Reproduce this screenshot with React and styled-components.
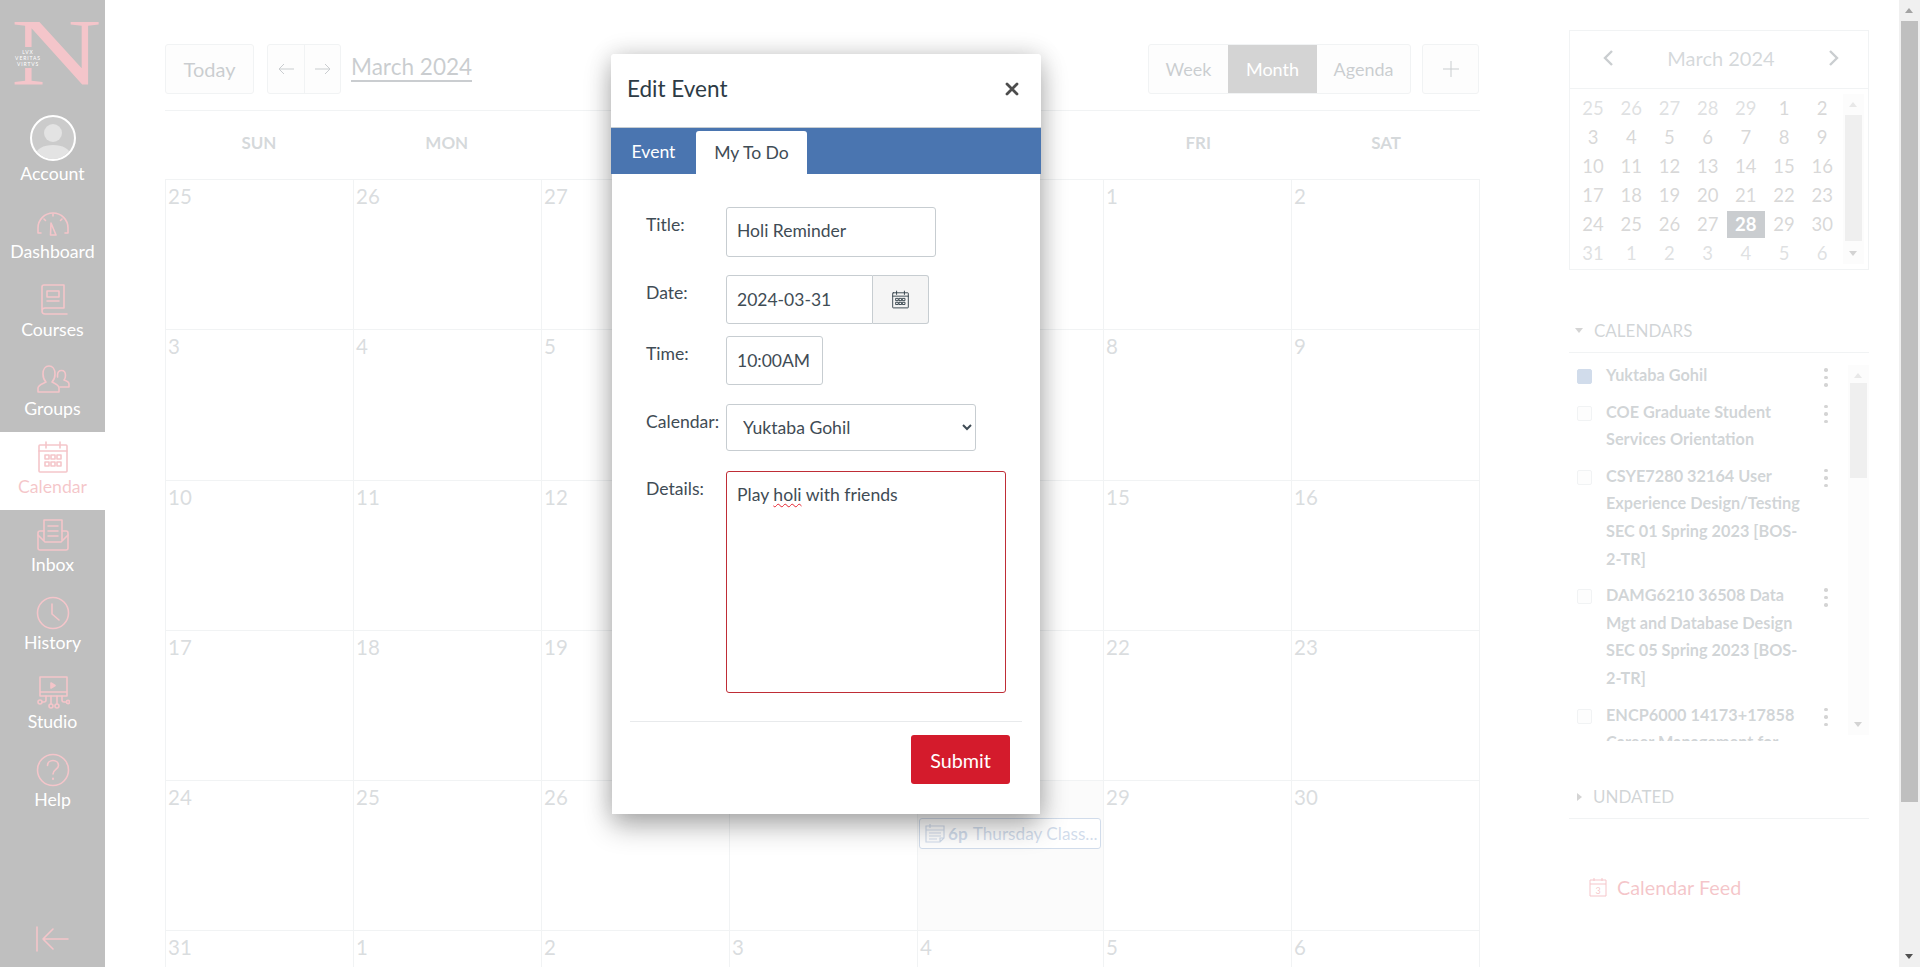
import React from 'react';
import styled, { createGlobalStyle } from 'styled-components';

const GlobalStyle = createGlobalStyle`
  html, body { margin: 0; padding: 0; height: 100%; overflow: hidden; background: #fff; }
  body { font-family: Lato, "Liberation Sans", sans-serif; color: #2d3b45; }
  * { box-sizing: border-box; }
`;

const RED = '#d41b2c';
const BLUE = '#4a75b0';
const INK = '#2d3b45';
const FORM_INK = '#3f4c55';
const LINE = '#c7cdd1';

//Sidebar icons
const Stroke = styled.svg`
  display: block;
  fill: none;
  stroke: ${RED};
  stroke-width: 1.6;
  stroke-linecap: round;
  stroke-linejoin: round;
`;

const DashboardIcon = () => (
  <Stroke width="34" height="34" viewBox="0 0 34 34">
    <path d="M5 28h-3v-5a15 15 0 0 1 30 0v5h-3" />
    <path d="M15 18l5 12h-5.500z" />
    <path d="M17 9v2M8 14l1.500 1.500M26 14l-1.500 1.500" />
  </Stroke>
);
const CoursesIcon = () => (
  <Stroke width="34" height="34" viewBox="0 0 34 34">
    <path d="M6 27V4a2 2 0 0 1 2-2h20v23H9a3 3 0 0 0-3 3 3 3 0 0 0 3 3h22" />
    <path d="M11 8h12v6H11zM11 18h12" />
  </Stroke>
);
const GroupsIcon = () => (
  <Stroke width="34" height="34" viewBox="0 0 34 34">
    <path d="M2 30v-4c0-3 4-4 8-6 -2-2-3-5-3-8 0-5 2.500-8 6-8s6 3 6 8c0 3-1 6-3 8 4 2 7 3 7 6v4z" />
    <path d="M24 25h9v-3c0-2-2-3-5-4 1-1 1.500-3 1.500-4.500 0-3-1.500-5-4-5s-4 2-4 5c0 .5 0 1 .1 1.500" />
  </Stroke>
);
const CalendarIcon = ({ size = 34, color }) => (
  <Stroke width={size} height={size} viewBox="0 0 34 34" style={color ? { stroke: color } : undefined}>
    <rect x="3" y="5" width="28" height="27" rx="1" />
    <path d="M3 11h28M10 2v6M24 2v6" />
    <path d="M9 15h4v4H9zM15 15h4v4h-4zM21 15h4v4h-4zM9 22h4v4H9zM15 22h4v4h-4zM21 22h4v4h-4z" />
  </Stroke>
);
const InboxIcon = () => (
  <Stroke width="34" height="34" viewBox="0 0 34 34">
    <path d="M8 22V2h18v20" />
    <path d="M12 8h10M12 13h10M12 18h10" />
    <path d="M8 13H4a2 2 0 0 0-2 2v15a2 2 0 0 0 2 2h26a2 2 0 0 0 2-2V15a2 2 0 0 0-2-2h-4" />
    <path d="M2 17l7 7h16l7-7" />
  </Stroke>
);
const HistoryIcon = () => (
  <Stroke width="34" height="34" viewBox="0 0 34 34">
    <circle cx="17" cy="17" r="15.500" />
    <path d="M16 8v10l7 6" />
  </Stroke>
);
const StudioIcon = () => (
  <Stroke width="34" height="34" viewBox="0 0 34 34">
    <path d="M4 2h27v19H4zM4 17h27" />
    <path d="M15 8l4 2.500-4 2.500z" fill={RED} />
    <path d="M10 21v4a2 2 0 0 1-2 2H6M15 21v8M21 21v8M26 21v4a2 2 0 0 0 2 2h2" />
    <circle cx="4" cy="27" r="2" />
    <circle cx="15" cy="31" r="2" />
    <circle cx="21" cy="31" r="2" />
    <circle cx="32" cy="27" r="1.600" />
  </Stroke>
);
const HelpIcon = () => (
  <Stroke width="34" height="34" viewBox="0 0 34 34">
    <circle cx="17" cy="17" r="15.500" />
    <path d="M11.500 12.500c0-3 2.500-5 5.500-5s5.500 2 5.500 5c0 4-5.500 4-5.500 8.500" />
    <path d="M17 25.500v.5" strokeWidth="2" />
  </Stroke>
);

const NAV = [
  { label: 'Dashboard', Icon: DashboardIcon },
  { label: 'Courses', Icon: CoursesIcon },
  { label: 'Groups', Icon: GroupsIcon },
  { label: 'Calendar', Icon: CalendarIcon, active: true },
  { label: 'Inbox', Icon: InboxIcon },
  { label: 'History', Icon: HistoryIcon },
  { label: 'Studio', Icon: StudioIcon },
  { label: 'Help', Icon: HelpIcon },
];

const WEEKDAYS = ['SUN', 'MON', 'TUE', 'WED', 'THU', 'FRI', 'SAT'];
const WEEKS = [
  [25, 26, 27, 28, 29, 1, 2],
  [3, 4, 5, 6, 7, 8, 9],
  [10, 11, 12, 13, 14, 15, 16],
  [17, 18, 19, 20, 21, 22, 23],
  [24, 25, 26, 27, 28, 29, 30],
  [31, 1, 2, 3, 4, 5, 6],
];

const CALENDARS = [
  { name: 'Yuktaba Gohil', on: true },
  { name: 'COE Graduate Student Services Orientation' },
  { name: 'CSYE7280 32164 User Experience Design/Testing SEC 01 Spring 2023 [BOS-2-TR]' },
  { name: 'DAMG6210 36508 Data Mgt and Database Design SEC 05 Spring 2023 [BOS-2-TR]' },
  { name: 'ENCP6000 14173+17858 Career Management for' },
];

const App = () => (
  <Viewport>
    <GlobalStyle />
    <Shell>
      <Sidebar>
        <Logo>
          <svg width="105" height="112" viewBox="0 0 105 112">
            <text fill={RED} fontFamily="'Liberation Serif', serif" fontSize="114" transform="translate(11 85) scale(1.1 .835)">N</text>
            <rect x="12" y="47" width="32" height="21" fill="#000" />
            <LogoMotto x="28" y="53.500">LVX</LogoMotto>
            <LogoMotto x="28" y="59.500">VERITAS</LogoMotto>
            <LogoMotto x="28" y="65.500">VIRTVS</LogoMotto>
          </svg>
        </Logo>
        <NavItem $account>
          <Avatar>
            <svg width="42" height="40" viewBox="0 0 42 40">
              <circle cx="21" cy="14" r="9" fill="#8e8e8e" />
              <path d="M2 40c1-11 10-14 19-14s18 3 19 14z" fill="#8e8e8e" />
            </svg>
          </Avatar>
          <NavLabel>Account</NavLabel>
        </NavItem>
        {NAV.map(({ label, Icon, active }) => (
          <NavItem key={label} $active={active}>
            <IconSlot><Icon /></IconSlot>
            <NavLabel $active={active}>{label}</NavLabel>
          </NavItem>
        ))}
        <Collapse>
          <Stroke width="34" height="26" viewBox="0 0 34 26">
            <path d="M2 1v24M33 13H8M18 3L8 13l10 10" />
          </Stroke>
        </Collapse>
      </Sidebar>

      <Main>
        <Toolbar>
          <ToolButton $width={89}>Today</ToolButton>
          <ArrowGroup>
            <ArrowButton>
              <svg width="16" height="12" viewBox="0 0 16 12" fill="none" stroke={INK} strokeWidth="1"><path d="M16 6H1M6 1L1 6l5 5" /></svg>
            </ArrowButton>
            <ArrowButton>
              <svg width="16" height="12" viewBox="0 0 16 12" fill="none" stroke={INK} strokeWidth="1"><path d="M0 6h15M10 1l5 5-5 5" /></svg>
            </ArrowButton>
          </ArrowGroup>
          <MonthTitle>March 2024</MonthTitle>
          <ViewGroup>
            <ViewTab $width={79}>Week</ViewTab>
            <ViewTab $width={89} $active>Month</ViewTab>
            <ViewTab $width={93}>Agenda</ViewTab>
          </ViewGroup>
          <PlusButton>
            <svg width="18" height="18" viewBox="0 0 18 18">
              <path d="M9 1v16M1 9h16" stroke={INK} strokeWidth="1" />
            </svg>
          </PlusButton>
        </Toolbar>
        <WeekHeader>
          {WEEKDAYS.map((d) => <WeekDay key={d}>{d}</WeekDay>)}
        </WeekHeader>
        <MonthGrid>
          {WEEKS.map((week, w) => week.map((day, d) => (
            <DayCell key={`${w}-${d}`} $today={w === 4 && d === 4}>
              <DayNum>{day}</DayNum>
              {w === 4 && d === 4 && (
                <EventPill>
                  <svg width="22" height="22" viewBox="0 0 22 22" fill="none" stroke={BLUE} strokeWidth="1.200">
                    <path d="M2 4h18v12l-4 4H2zM6 2v4M2 8h18M5 11h12M5 14h12M5 17h8M16 20v-4h4" />
                  </svg>
                  <EventTime>6p</EventTime>
                  <EventName>Thursday Class...</EventName>
                </EventPill>
              )}
            </DayCell>
          )))}
        </MonthGrid>
      </Main>

      <Aside>
        <MiniCalendar>
          <MiniHead>
            <svg width="14" height="18" viewBox="0 0 14 18" fill="none" stroke={INK} strokeWidth="2.400"><path d="M11 2L4 9l7 7" /></svg>
            <MiniTitle>March 2024</MiniTitle>
            <svg width="14" height="18" viewBox="0 0 14 18" fill="none" stroke={INK} strokeWidth="2.400"><path d="M3 2l7 7-7 7" /></svg>
          </MiniHead>
          <MiniBody>
            <MiniDays>
              {WEEKS.map((week, w) => week.map((day, d) => (
                <MiniDay
                  key={`${w}-${d}`}
                  $today={w === 4 && d === 4}
                  $outside={(w === 0 && d < 5) || w === 5}
                >
                  {day}
                </MiniDay>
              )))}
            </MiniDays>
            <InnerBar $top={1} $height={170}>
              <ScrollUp />
              <BarThumb $top={21} $height={126} />
              <ScrollDown />
            </InnerBar>
          </MiniBody>
        </MiniCalendar>

        <SectionHead $top={39}>
          <Caret $open />
          CALENDARS
        </SectionHead>
        <CalendarList>
          <CalendarRows>
            {CALENDARS.map((c) => (
              <CalendarRow key={c.name}>
                <Check $on={c.on} />
                <CalendarName>{c.name}</CalendarName>
                <Dots>
                  <i /><i /><i />
                </Dots>
              </CalendarRow>
            ))}
          </CalendarRows>
          <InnerBar $top={12} $height={370}>
            <ScrollUp />
            <BarThumb $top={18} $height={95} />
            <ScrollDown />
          </InnerBar>
        </CalendarList>
        <SectionHead $top={34}>
          <Caret />
          UNDATED
        </SectionHead>
        <FeedLink>
          <svg width="18" height="20" viewBox="0 0 18 20" fill="none" stroke={RED} strokeWidth="1">
            <path d="M1 3h16v16H1zM1 7h16M5 1v3M13 1v3" />
            <text x="9" y="16.500" textAnchor="middle" fontSize="9" fill={RED} stroke="none" fontFamily="Lato, sans-serif">3</text>
          </svg>
          Calendar Feed
        </FeedLink>
      </Aside>

      <Overlay />

      <Modal>
        <ModalHead>
          <ModalTitle>Edit Event</ModalTitle>
          <svg width="14" height="14" viewBox="0 0 14 14" stroke="#4d4d4d" strokeWidth="2.800" strokeLinecap="round">
            <path d="M2 2l10 10M12 2L2 12" />
          </svg>
        </ModalHead>
        <TabBar>
          <Tab>Event</Tab>
          <Tab $active>My To Do</Tab>
        </TabBar>
        <ModalBody>
          <FormRow $top={33}>
            <FieldLabel>Title:</FieldLabel>
            <TextField $width={210} $height={50} $lift={3} readOnly value="Holi Reminder" />
          </FormRow>
          <FormRow $top={18}>
            <FieldLabel>Date:</FieldLabel>
            <TextField $width={147} $height={49} $joined readOnly value="2024-03-31" />
            <DateButton>
              <CalendarIcon size={19} color={INK} />
            </DateButton>
          </FormRow>
          <FormRow $top={12}>
            <FieldLabel>Time:</FieldLabel>
            <TextField $width={97} $height={49} readOnly value="10:00AM" />
          </FormRow>
          <FormRow $top={19}>
            <FieldLabel>Calendar:</FieldLabel>
            <SelectField defaultValue="me">
              <option value="me">Yuktaba Gohil</option>
            </SelectField>
          </FormRow>
          <FormRow $top={20}>
            <FieldLabel>Details:</FieldLabel>
            <DetailsBox>Play <Misspelt>holi</Misspelt> with friends</DetailsBox>
          </FormRow>
          <FormFooter>
            <SubmitButton>Submit</SubmitButton>
          </FormFooter>
        </ModalBody>
      </Modal>
    </Shell>
    <PageScrollbar>
      <ScrollUp />
      <BarThumb $top={21} $height={781} />
      <ScrollDown />
    </PageScrollbar>
  </Viewport>
);

const Viewport = styled.div`
  display: flex;
  width: 100vw;
  height: 100vh;
  overflow: hidden;
`;

const Shell = styled.div`
  position: relative;
  display: flex;
  flex: 1;
  min-width: 0;
  height: 100%;
  overflow: hidden;
`;

const Overlay = styled.div`
  position: absolute;
  inset: 0;
  background: rgba(255, 255, 255, 0.75);
`;

const Sidebar = styled.nav`
  display: flex;
  flex-direction: column;
  flex: none;
  width: 105px;
  height: 100%;
  background: #000;
`;

const Logo = styled.div`
  flex: none;
  height: 112px;
`;

const LogoMotto = styled.text`
  fill: #fff;
  font-family: Lato, sans-serif;
  font-size: 5px;
  letter-spacing: 0.9px;
  text-anchor: middle;
`;

const NavItem = styled.div`
  display: flex;
  flex-direction: column;
  align-items: center;
  flex: none;
  height: ${(p) => (p.$account ? 85 : 78.3)}px;
  padding-top: ${(p) => (p.$account ? 3 : 8)}px;
  background: ${(p) => (p.$active ? '#fff' : 'transparent')};
`;

const IconSlot = styled.div`
  height: 34px;
`;

const Avatar = styled.div`
  display: flex;
  align-items: flex-end;
  justify-content: center;
  flex: none;
  width: 46px;
  height: 46px;
  border: 2px solid #fff;
  border-radius: 50%;
  background: #333;
  overflow: hidden;
`;

const NavLabel = styled.div`
  margin-top: 2px;
  font-size: 17.7px;
  line-height: 22px;
  color: ${(p) => (p.$active ? RED : '#fff')};
`;

const Collapse = styled.div`
  margin-top: auto;
  padding: 0 0 15px 35px;
`;

const Main = styled.main`
  flex: none;
  width: 1315px;
  margin-left: 60px;
`;

const Toolbar = styled.div`
  display: flex;
  align-items: center;
  height: 111px;
  padding: 44px 1px 16px 0;
  border-bottom: 1px solid ${LINE};
`;

const ToolButton = styled.div`
  display: flex;
  align-items: center;
  justify-content: center;
  width: ${(p) => p.$width}px;
  height: 50px;
  background: #f5f5f5;
  border: 1px solid ${LINE};
  border-radius: 3px;
  font-size: 20px;
  color: ${INK};
`;

const ArrowGroup = styled.div`
  display: flex;
  height: 50px;
  margin-left: 13px;
  background: #f5f5f5;
  border: 1px solid ${LINE};
  border-radius: 3px;
`;

const ArrowButton = styled.div`
  display: flex;
  align-items: center;
  justify-content: center;
  width: 36px;
  & + & {
    border-left: 1px solid ${LINE};
  }
`;

const MonthTitle = styled.div`
  margin: 0 0 2px 10px;
  font-size: 22.6px;
  line-height: 26px;
  color: ${INK};
  border-bottom: 2px solid ${INK};
`;

const ViewGroup = styled.div`
  display: flex;
  height: 50px;
  margin-left: auto;
  background: #f5f5f5;
  border: 1px solid ${LINE};
  border-radius: 3px;
  overflow: hidden;
`;

const ViewTab = styled.div`
  display: flex;
  align-items: center;
  justify-content: center;
  width: ${(p) => p.$width}px;
  font-size: 18px;
  background: ${(p) => (p.$active ? '#555' : 'transparent')};
  color: ${(p) => (p.$active ? '#fff' : INK)};
`;

const PlusButton = styled.div`
  display: flex;
  align-items: center;
  justify-content: center;
  width: 57px;
  height: 50px;
  margin-left: 11px;
  background: #f5f5f5;
  border: 1px solid ${LINE};
  border-radius: 3px;
`;

const WeekHeader = styled.div`
  display: grid;
  grid-template-columns: repeat(7, 1fr);
  height: 68px;
`;

const WeekDay = styled.div`
  display: flex;
  align-items: center;
  justify-content: center;
  padding-bottom: 5px;
  font-size: 17px;
  font-weight: 700;
  color: #5a6770;
`;

const MonthGrid = styled.div`
  display: grid;
  grid-template-columns: repeat(4, 188px) 186px 188px 188px;
  grid-auto-rows: 150.300px;
  border-top: 1px solid ${LINE};
`;

const DayCell = styled.div`
  padding: 3px 4px 0 2px;
  border-left: 1px solid ${LINE};
  border-bottom: 1px solid ${LINE};
  background: ${(p) => (p.$today ? '#eeeeee' : 'transparent')};
  &:nth-child(7n) {
    width: 189px;
    border-right: 1px solid ${LINE};
  }
`;

const DayNum = styled.div`
  font-size: 20.5px;
  line-height: 26px;
  color: #6b7780;
`;

const EventPill = styled.div`
  display: flex;
  align-items: center;
  height: 31px;
  margin: 8px -2px 0 -1px;
  padding: 0 0 1px 4px;
  background: #fff;
  border: 1px solid ${BLUE};
  border-radius: 3px;
  font-size: 17.2px;
  color: ${BLUE};
  white-space: nowrap;
  overflow: hidden;
`;

const EventTime = styled.span`
  margin-left: 2px;
  font-weight: 700;
`;

const EventName = styled.span`
  margin-left: 5px;
`;

const Aside = styled.aside`
  flex: none;
  width: 300px;
  margin-left: 89px;
  padding-top: 30px;
`;

const MiniCalendar = styled.div`
  height: 240px;
  border: 1px solid ${LINE};
`;

const MiniHead = styled.div`
  display: flex;
  align-items: center;
  justify-content: space-between;
  height: 58px;
  padding: 0 27px 4px 31px;
  border-bottom: 1px solid ${LINE};
`;

const MiniTitle = styled.div`
  font-size: 20px;
  color: #5a6770;
`;

const MiniBody = styled.div`
  display: flex;
  justify-content: space-between;
  padding: 4px 4px 0 4px;
`;

const MiniDays = styled.div`
  display: grid;
  grid-template-columns: repeat(7, 38.200px);
  grid-auto-rows: 29.200px;
`;

const MiniDay = styled.div`
  display: flex;
  align-items: center;
  justify-content: center;
  font-size: 18.5px;
  height: ${(p) => (p.$today ? 27 : 29)}px;
  margin-top: ${(p) => (p.$today ? 1 : 0)}px;
  font-weight: ${(p) => (p.$today ? 700 : 400)};
  background: ${(p) => (p.$today ? INK : 'transparent')};
  color: ${(p) => (p.$today ? '#fff' : p.$outside ? '#7f878d' : '#666')};
`;

const InnerBar = styled.div`
  position: relative;
  flex: none;
  width: 21px;
  height: ${(p) => p.$height}px;
  margin-top: ${(p) => p.$top}px;
  background: #f1f1f1;
`;

const BarThumb = styled.div`
  position: absolute;
  left: 2px;
  right: 2px;
  top: ${(p) => p.$top}px;
  height: ${(p) => p.$height}px;
  background: #bfbfbf;
`;

const ScrollUp = styled.div`
  position: absolute;
  left: 6px;
  top: 8px;
  border-left: 4.500px solid transparent;
  border-right: 4.500px solid transparent;
  border-bottom: 5px solid #a3a3a3;
`;

const ScrollDown = styled.div`
  position: absolute;
  left: 6px;
  bottom: 8px;
  border-left: 4.500px solid transparent;
  border-right: 4.500px solid transparent;
  border-top: 5px solid #505050;
`;

const SectionHead = styled.div`
  display: flex;
  align-items: center;
  height: 44px;
  margin-top: ${(p) => p.$top}px;
  padding-left: 6px;
  font-size: 17px;
  color: #4a5761;
  border-bottom: 1px solid ${LINE};
`;

const Caret = styled.span`
  width: 0;
  height: 0;
  margin-right: 11px;
  ${(p) => (p.$open
    ? `border-left: 4.500px solid transparent; border-right: 4.500px solid transparent; border-top: 5.500px solid #555;`
    : `margin-left: 2px; border-top: 4.500px solid transparent; border-bottom: 4.500px solid transparent; border-left: 5.500px solid #555;`)}
`;

const CalendarList = styled.div`
  display: flex;
  align-items: flex-start;
  height: 388px;
  overflow: hidden;
`;

const CalendarRows = styled.div`
  flex: 1;
  min-width: 0;
  padding: 8px 0 0 8px;
`;

const CalendarRow = styled.div`
  display: flex;
  margin-bottom: 9px;
`;

const Check = styled.span`
  flex: none;
  width: 15px;
  height: 15px;
  margin-top: 8px;
  border-radius: 2px;
  border: 1px solid ${(p) => (p.$on ? BLUE : LINE)};
  background: ${(p) => (p.$on ? BLUE : '#f5f5f5')};
`;

const CalendarName = styled.div`
  flex: none;
  width: 200px;
  margin-left: 14px;
  font-size: 16.3px;
  font-weight: 700;
  line-height: 27.600px;
  color: #4a5761;
`;

const Dots = styled.div`
  display: flex;
  flex-direction: column;
  gap: 4px;
  margin: 7px 0 0 18px;
  i {
    display: block;
    width: 3.500px;
    height: 3.500px;
    border-radius: 50%;
    background: #555;
  }
`;

const FeedLink = styled.div`
  display: flex;
  align-items: center;
  gap: 10px;
  margin: 56px 0 0 20px;
  font-size: 19.8px;
  line-height: 24px;
  color: ${RED};
`;

const Modal = styled.div`
  position: absolute;
  left: 612px;
  top: 54px;
  width: 428px;
  height: 760px;
  background: #fff;
  border-radius: 3px 3px 0 0;
  box-shadow: 0 12px 28px rgba(0, 0, 0, 0.3), 0 0 24px rgba(0, 0, 0, 0.14);
`;

const ModalHead = styled.div`
  display: flex;
  align-items: center;
  justify-content: space-between;
  height: 74px;
  margin: 0 -1px;
  padding: 0 22px 4px 16px;
  background: #fff;
  border-radius: 3px 3px 0 0;
  border-bottom: 1px solid ${LINE};
`;

const ModalTitle = styled.h2`
  margin: 0;
  font-size: 22.5px;
  font-weight: 400;
  color: ${INK};
`;

const TabBar = styled.div`
  display: flex;
  align-items: flex-end;
  height: 46px;
  margin: 0 -1px;
  background: ${BLUE};
`;

const Tab = styled.div`
  display: flex;
  align-items: center;
  justify-content: center;
  width: ${(p) => (p.$active ? 111 : 85)}px;
  height: ${(p) => (p.$active ? 43 : 46)}px;
  font-size: 17.6px;
  background: ${(p) => (p.$active ? '#fff' : 'transparent')};
  color: ${(p) => (p.$active ? FORM_INK : '#fff')};
  border-radius: ${(p) => (p.$active ? '3px 3px 0 0' : '0')};
`;

const ModalBody = styled.div`
  padding-left: 34px;
`;

const FormRow = styled.div`
  display: flex;
  align-items: flex-start;
  margin-top: ${(p) => p.$top}px;
`;

const FieldLabel = styled.label`
  flex: none;
  width: 80px;
  padding-top: 7px;
  font-size: 17.6px;
  line-height: 22px;
  color: ${FORM_INK};
`;

const TextField = styled.input`
  flex: none;
  width: ${(p) => p.$width}px;
  height: ${(p) => p.$height}px;
  padding: 0 10px ${(p) => p.$lift ?? 0}px;
  font-family: inherit;
  font-size: 17.5px;
  color: ${FORM_INK};
  background: #fff;
  border: 1px solid ${LINE};
  border-radius: ${(p) => (p.$joined ? '3px 0 0 3px' : '3px')};
  outline: none;
`;

const DateButton = styled.div`
  display: flex;
  align-items: center;
  justify-content: center;
  width: 56px;
  height: 49px;
  background: #f5f5f5;
  border: 1px solid ${LINE};
  border-left: 0;
  border-radius: 0 3px 3px 0;
`;

const SelectField = styled.select`
  width: 250px;
  height: 47px;
  padding: 0 12px;
  font-family: inherit;
  font-size: 17.6px;
  color: ${FORM_INK};
  background: #fff;
  border: 1px solid ${LINE};
  border-radius: 3px;
  outline: none;
`;

const DetailsBox = styled.div`
  width: 280px;
  height: 222px;
  padding: 12px 10px;
  font-size: 17.6px;
  line-height: 22px;
  color: ${FORM_INK};
  border: 1px solid #bf2d36;
  border-radius: 3px;
`;

const Misspelt = styled.span`
  text-decoration: underline wavy #e5232f 1px;
  text-underline-offset: 2px;
`;

const FormFooter = styled.div`
  display: flex;
  justify-content: flex-end;
  margin: 28px 18px 0 -16px;
  padding: 13px 12px 0 0;
  border-top: 1px solid #e8eaec;
`;

const SubmitButton = styled.button`
  width: 99px;
  height: 49px;
  padding: 0;
  font-family: inherit;
  font-size: 19.8px;
  color: #fff;
  background: ${RED};
  border: 0;
  border-radius: 3px;
`;

const PageScrollbar = styled.div`
  position: relative;
  flex: none;
  width: 21px;
  height: 100%;
  background: #f0f0f0;
`;

export default App;
